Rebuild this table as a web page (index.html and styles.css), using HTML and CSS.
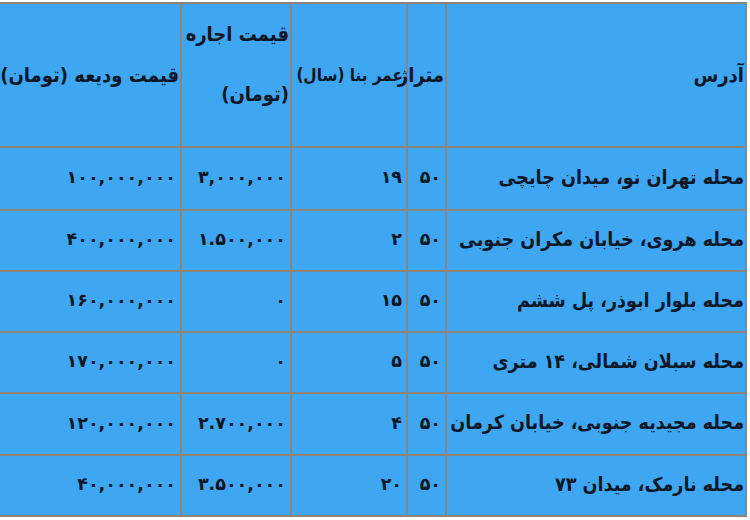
FILE: index.html
```html
<!DOCTYPE html>
<html lang="fa" dir="rtl">
<head>
<meta charset="utf-8">
<title>جدول اجاره</title>
<link rel="stylesheet" href="styles.css">
</head>
<body>
<table class="grid">
  <colgroup>
    <col class="c-addr">
    <col class="c-area">
    <col class="c-age">
    <col class="c-rent">
    <col class="c-deposit">
  </colgroup>
  <thead>
    <tr class="head">
      <th>آدرس</th>
      <th>متراژ</th>
      <th class="age">عمر بنا (سال)</th>
      <th class="two-line">قیمت اجاره<br>(تومان)</th>
      <th>قیمت ودیعه (تومان)</th>
    </tr>
  </thead>
  <tbody>
    <tr class="row-first">
      <td>محله تهران نو، میدان چایچی</td>
      <td class="num">۵۰</td>
      <td class="num">۱۹</td>
      <td class="num">۳,۰۰۰,۰۰۰</td>
      <td class="num">۱۰۰,۰۰۰,۰۰۰</td>
    </tr>
    <tr>
      <td>محله هروی، خیابان مکران جنوبی</td>
      <td class="num">۵۰</td>
      <td class="num">۲</td>
      <td class="num">۱.۵۰۰,۰۰۰</td>
      <td class="num">۴۰۰,۰۰۰,۰۰۰</td>
    </tr>
    <tr>
      <td>محله بلوار ابوذر، پل ششم</td>
      <td class="num">۵۰</td>
      <td class="num">۱۵</td>
      <td class="num">۰</td>
      <td class="num">۱۶۰,۰۰۰,۰۰۰</td>
    </tr>
    <tr>
      <td>محله سبلان شمالی، ۱۴ متری</td>
      <td class="num">۵۰</td>
      <td class="num">۵</td>
      <td class="num">۰</td>
      <td class="num">۱۷۰,۰۰۰,۰۰۰</td>
    </tr>
    <tr class="row-tall">
      <td>محله مجیدیه جنوبی، خیابان کرمان</td>
      <td class="num">۵۰</td>
      <td class="num">۴</td>
      <td class="num">۲.۷۰۰,۰۰۰</td>
      <td class="num">۱۲۰,۰۰۰,۰۰۰</td>
    </tr>
    <tr>
      <td>محله نارمک، میدان ۷۳</td>
      <td class="num">۵۰</td>
      <td class="num">۲۰</td>
      <td class="num">۳.۵۰۰,۰۰۰</td>
      <td class="num">۴۰,۰۰۰,۰۰۰</td>
    </tr>
  </tbody>
</table>
</body>
</html>
```
FILE: styles.css
```css
html, body {
  margin: 0;
  padding: 0;
  background: #ffffff;
}

body {
  width: 750px;
  height: 520px;
  overflow: hidden;
  font-family: "DejaVu Sans Condensed", "DejaVu Sans", sans-serif;
  font-stretch: condensed;
  color: #0b1626;
}

.grid {
  border-collapse: collapse;
  table-layout: fixed;
  width: 748px;
  margin: 2px 3px 0 -1px;
  background: #3fa7f1;
  font-size: 19.5px;
  font-weight: bold;
}

.c-addr { width: 300px; }
.c-area { width: 39px; }
.c-age { width: 116px; }
.c-rent { width: 110px; }
.c-deposit { width: 183px; }

.grid th,
.grid td {
  border: 2px solid #8f8477;
  padding: 0 1px 0 0;
  text-align: right;
  white-space: nowrap;
  overflow: visible;
  vertical-align: middle;
}

.head th {
  height: 142px;
  font-size: 20px;
  font-weight: bold;
}

.head th.age {
  font-size: 17px;
  padding-right: 3px;
}

.head th.two-line {
  vertical-align: top;
  line-height: 60px;
  padding-top: 0;
  height: 142px;
}

.grid tbody td {
  height: 56px;
  padding-bottom: 3px;
}

.grid tbody .row-first td {
  height: 58px;
}

.grid tbody .row-tall td {
  height: 57px;
}

.grid td.num {
  padding-right: 4px;
  font-size: 17.5px;
  font-family: "DejaVu Sans", sans-serif;
  font-stretch: normal;
}
```
